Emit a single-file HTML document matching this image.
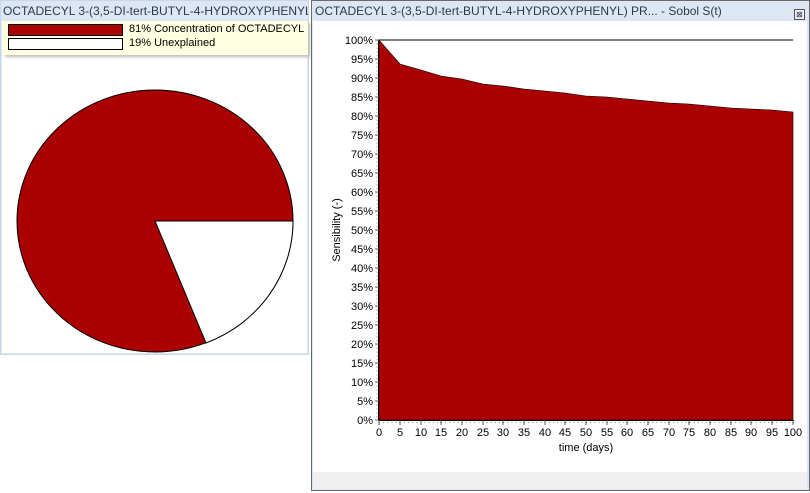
<!DOCTYPE html>
<html><head><meta charset="utf-8"><style>
body{margin:0;width:810px;height:493px;background:#fff;position:relative;overflow:hidden;font-family:"Liberation Sans",sans-serif}
.t{position:absolute;color:#2a3a50;white-space:nowrap;font-family:"Liberation Sans",sans-serif;font-size:12px;overflow:hidden}
</style></head><body>
<!-- left window -->
<div style="position:absolute;left:0;top:0;width:309px;height:355px;background:#dde7f3;border:1px solid #c9d7e8;box-sizing:border-box"></div>
<div style="position:absolute;left:2px;top:21px;width:305px;height:332px;background:#fff"></div>
<div class="t" style="left:3px;top:4px;width:305px">OCTADECYL 3-(3,5-DI-tert-BUTYL-4-HYDROXYPHENYL)...</div>
<div style="position:absolute;left:3px;top:21px;width:305px;height:34px;background:#ffffe1;box-shadow:2px 2px 3px #bbb"></div>
<div style="position:absolute;left:8px;top:24px;width:113px;height:10px;background:#a00;border:1px solid #000"></div>
<div style="position:absolute;left:8px;top:38px;width:113px;height:10px;background:#fff;border:1px solid #000"></div>
<div style="position:absolute;left:129px;top:23px;font-size:11px;color:#000;white-space:nowrap;width:178px;overflow:hidden">81% Concentration of OCTADECYL 3</div>
<div style="position:absolute;left:129px;top:37px;font-size:11px;color:#000">19% Unexplained</div>
<svg style="position:absolute;left:0;top:0" width="310" height="360">
<ellipse cx="155" cy="221" rx="138" ry="131" fill="#a00" stroke="#000" stroke-width="1"/>
<path d="M155 221 L293 221 A138 131 0 0 1 206 343 Z" fill="#fff" stroke="#000" stroke-width="1"/>
</svg>
<!-- right window -->
<div style="position:absolute;left:311px;top:0;width:499px;height:491px;background:#dde7f3;border:1px solid #6a6a6a;box-sizing:border-box"></div>
<div style="position:absolute;left:313px;top:21px;width:494px;height:468px;background:#fff"></div>
<div style="position:absolute;left:313px;top:472px;width:494px;height:17px;background:#f0f0f0"></div>
<div class="t" style="left:315px;top:4px">OCTADECYL 3-(3,5-DI-tert-BUTYL-4-HYDROXYPHENYL) PR... - Sobol S(t)</div>
<div style="position:absolute;left:794px;top:9px;width:9px;height:9px;border:1px solid #555;font-size:8px;line-height:9px;text-align:center;color:#333;background:#eef">⊠</div>
<svg style="position:absolute;left:0;top:0" width="810" height="493" font-family="Liberation Sans, sans-serif" font-size="11">
<path d="M379 420 L379 40 L400 64 L421 70 L441 76 L462 79 L483 84 L503 86 L524 89 L545 91 L565 93 L586 96 L607 97 L627 99 L648 101 L669 103 L689 104 L710 106 L731 108 L751 109 L772 110 L793 112 L793 420 Z" fill="#a00" stroke="#000" stroke-width="0.6"/>
<line x1="379" y1="40" x2="793" y2="40" stroke="#000"/>
<line x1="378.5" y1="40" x2="378.5" y2="421" stroke="#000"/>
<line x1="378" y1="420.5" x2="794" y2="420.5" stroke="#000"/>
<g fill="#000" text-anchor="end">
<text x="373" y="44">100%</text><text x="373" y="63">95%</text><text x="373" y="82">90%</text><text x="373" y="101">85%</text><text x="373" y="120">80%</text><text x="373" y="139">75%</text><text x="373" y="158">70%</text><text x="373" y="177">65%</text><text x="373" y="196">60%</text><text x="373" y="215">55%</text><text x="373" y="234">50%</text><text x="373" y="253">45%</text><text x="373" y="272">40%</text><text x="373" y="291">35%</text><text x="373" y="310">30%</text><text x="373" y="329">25%</text><text x="373" y="348">20%</text><text x="373" y="367">15%</text><text x="373" y="386">10%</text><text x="373" y="405">5%</text><text x="373" y="424">0%</text>
</g>
<g fill="#000" text-anchor="middle">
<text x="379" y="436">0</text><text x="400" y="436">5</text><text x="421" y="436">10</text><text x="441" y="436">15</text><text x="462" y="436">20</text><text x="483" y="436">25</text><text x="503" y="436">30</text><text x="524" y="436">35</text><text x="545" y="436">40</text><text x="565" y="436">45</text><text x="586" y="436">50</text><text x="607" y="436">55</text><text x="627" y="436">60</text><text x="648" y="436">65</text><text x="669" y="436">70</text><text x="689" y="436">75</text><text x="710" y="436">80</text><text x="731" y="436">85</text><text x="751" y="436">90</text><text x="772" y="436">95</text><text x="793" y="436">100</text>
<text x="586" y="451">time (days)</text>
<text transform="translate(340 230) rotate(-90)">Sensibility (-)</text>
</g>
<path stroke="#666" stroke-width="1" d="M375 40h4M375 59h4M375 78h4M375 97h4M375 116h4M375 135h4M375 154h4M375 173h4M375 192h4M375 211h4M375 230h4M375 249h4M375 268h4M375 287h4M375 306h4M375 325h4M375 344h4M375 363h4M375 382h4M375 401h4M375 420h4"/>
<path stroke="#888" stroke-width="1" stroke-dasharray="1 2.8" d="M377 40V420"/>
<path stroke="#888" stroke-width="1" stroke-dasharray="1 3.14" d="M379 422.5H794"/>
<path stroke="#555" stroke-width="1" d="M379 420v5M400 420v5M421 420v5M441 420v5M462 420v5M483 420v5M503 420v5M524 420v5M545 420v5M565 420v5M586 420v5M607 420v5M627 420v5M648 420v5M669 420v5M689 420v5M710 420v5M731 420v5M751 420v5M772 420v5M793 420v5"/>
</svg>
</body></html>
